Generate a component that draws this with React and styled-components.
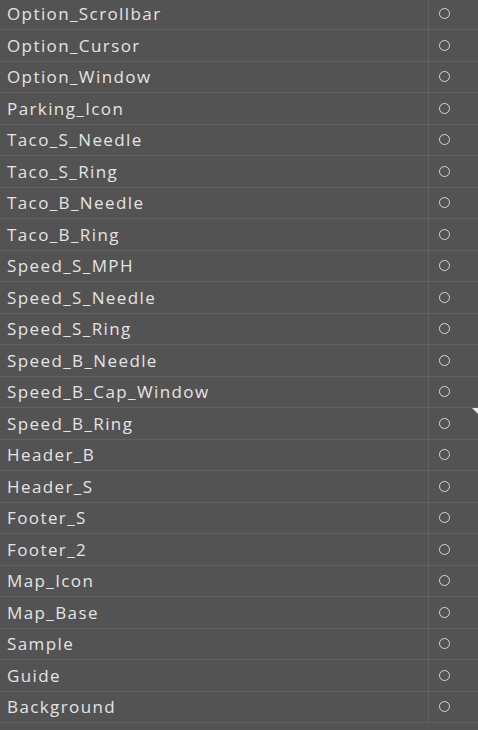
import React from 'react';
import styled, { createGlobalStyle } from 'styled-components';

const GlobalStyle = createGlobalStyle`
  html, body {
    margin: 0;
    padding: 0;
    background: #535353;
  }
`;

const Wrapper = styled.div`
  width: 478px;
  height: 730px;
  overflow: hidden;
  position: relative;
  background: #535353;
  font-family: "Open Sans", "Noto Sans", sans-serif;
`;

const List = styled.div`
  display: flex;
  flex-direction: column;
  margin-top: -1.5px;
`;

const Row = styled.div`
  display: flex;
  height: 31.5px;
  box-sizing: border-box;
  border-bottom: 1px solid #616161;
`;

const Name = styled.div`
  flex: 1;
  display: flex;
  align-items: center;
  padding-left: 7px;
  font-size: 17px;
  letter-spacing: 1.4px;
  color: #e4e4e4;
  border-right: 1px solid #616161;
`;

const Status = styled.div`
  width: 49px;
  display: flex;
  align-items: center;
  padding-left: 10px;
  box-sizing: border-box;
`;

const Dot = styled.span`
  width: 11px;
  height: 11px;
  box-sizing: border-box;
  border: 1.5px solid #d6d6d6;
  border-radius: 50%;
`;

const Pointer = styled.div`
  position: absolute;
  right: 0;
  top: 408px;
  width: 0;
  height: 0;
  border-top: 6px solid #e8e8e8;
  border-left: 6px solid transparent;
`;

const layers = [
  'Option_Scrollbar', 'Option_Cursor', 'Option_Window', 'Parking_Icon',
  'Taco_S_Needle', 'Taco_S_Ring', 'Taco_B_Needle', 'Taco_B_Ring',
  'Speed_S_MPH', 'Speed_S_Needle', 'Speed_S_Ring', 'Speed_B_Needle',
  'Speed_B_Cap_Window', 'Speed_B_Ring', 'Header_B', 'Header_S',
  'Footer_S', 'Footer_2', 'Map_Icon', 'Map_Base', 'Sample', 'Guide',
  'Background'
];

export default function App() {
  return (
    <Wrapper>
      <GlobalStyle />
      <List>
        {layers.map(name => (
          <Row key={name}>
            <Name>{name}</Name>
            <Status><Dot /></Status>
          </Row>
        ))}
      </List>
      <Pointer />
    </Wrapper>
  );
}
